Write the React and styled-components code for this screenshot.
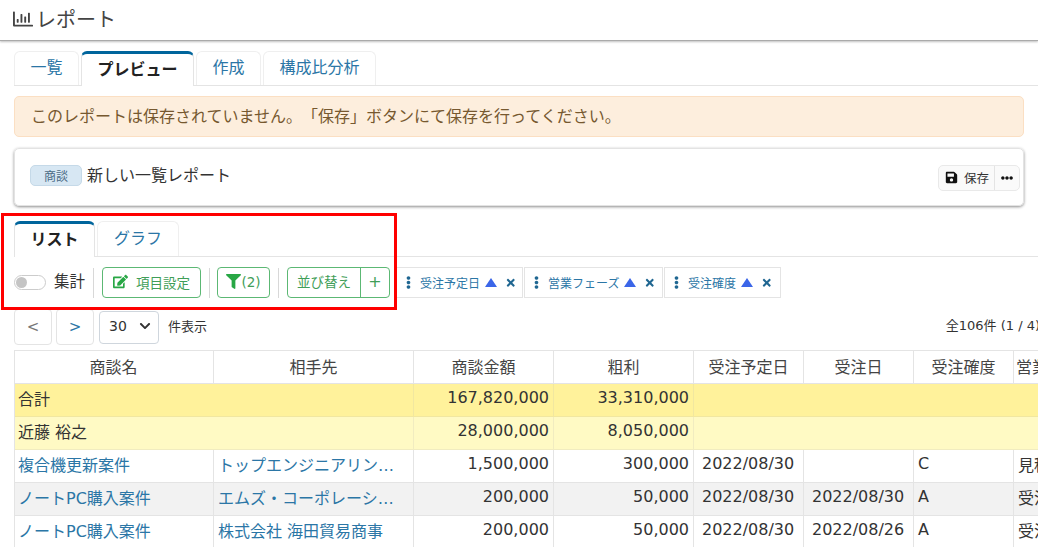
import React from "react";
import styled, { createGlobalStyle } from "styled-components";
import { FaRegChartBar, FaEdit, FaFilter, FaSave, FaEllipsisH, FaEllipsisV, FaTimes, FaChevronDown } from "react-icons/fa";

const Global = createGlobalStyle`
  html, body { margin: 0; padding: 0; background: #fff; overflow: hidden; }
  body { font-family: "DejaVu Sans", "Noto Sans CJK JP", sans-serif; color: #333; width: 1038px; height: 547px; text-spacing-trim: space-all; }
  * { box-sizing: border-box; }
`;
const Page = styled.div`position: relative; width: 1038px; height: 547px; overflow: hidden;`;
const Header = styled.header`
  height: 41px; display: flex; align-items: center; gap: 3px; padding: 0 0 3px 13px;
  border-bottom: 1px solid #aaa; box-shadow: 0 1px 2px rgba(0,0,0,.25);
  font-size: 20px; color: #444;
  svg { font-size: 20px; color: #444; }
`;
const Main = styled.main`padding: 0 14px;`;
const Tabs = styled.div`
  display: flex; gap: 2px; height: ${p => p.$h}px; margin-top: ${p => p.$mt}px;
  border-bottom: 1px solid #e4e4e4; margin-right: -14px;
`;
const Tab = styled.div`
  width: ${p => p.$w}px; display: flex; align-items: center; justify-content: center;
  font-size: 16px; border-radius: 6px 6px 0 0; padding-bottom: 5px;
  color: ${p => (p.$active ? "#222" : "#2b76a6")};
  font-weight: ${p => (p.$active ? 700 : 400)};
  border: 1px solid #efefef;
  border-bottom: none;
  ${p => p.$active && `
    border-top: 3px solid #00659c; border-left-color: #e4e4e4; border-right-color: #e4e4e4;
    background: #fff; margin-bottom: -1px;
  `}
`;
const Alert = styled.div`
  margin-top: 10px; height: 41px; display: flex; align-items: center; padding: 0 0 3px 16px;
  background: #fdeedd; border: 1px solid #fbdfc3; border-radius: 5px; color: #76582f; font-size: 16px;
`;
const Card = styled.section`
  margin-top: 11px; height: 58px; display: flex; align-items: center; justify-content: space-between;
  padding: 0 3px 0 15px; border: 1px solid #e3e3e3; border-radius: 5px;
  box-shadow: 0 1px 3px rgba(0,0,0,.45); font-size: 16px;
`;
const CardTitle = styled.div`display: flex; align-items: center; gap: 5px; padding-bottom: 4px;`;
const CardName = styled.span`padding-bottom: 3px;`;
const Badge = styled.span`
  width: 52px; height: 21px; display: inline-flex; align-items: center; justify-content: center;
  background: #d7e7f3; border: 1px solid #c5d9e8; border-radius: 5px; color: #4a6a85; font-size: 12px;
`;
const SaveGroup = styled.div`
  display: flex; height: 26px; margin-top: 1px; border: 1px solid #e9e9e9; border-radius: 5px; background: #fafafa; font-size: 12.5px; color: #333;
`;
const SaveBtn = styled.div`display: flex; align-items: center; gap: 6px; padding: 0 5px 0 6px; svg { font-size: 13px; color: #111; }`;
const MoreBtn = styled.div`width: 25px; display: flex; align-items: center; justify-content: center; border-left: 1px solid #e4e4e4; svg { font-size: 12px; color: #111; }`;
const Toolbar = styled.div`margin-top: 10px; height: 31px; display: flex; align-items: center;`;
const Toggle = styled.span`
  position: relative; width: 32px; height: 15px; border: 1px solid #ccc; border-radius: 8px; background: #fff;
  &::after { content: ""; position: absolute; left: 1px; top: 1px; width: 11px; height: 11px; border-radius: 50%; background: #c4c4c4; }
`;
const ToggleLabel = styled.span`margin-left: 8px; font-size: 15.5px; padding-bottom: 6px;`;
const Sep = styled.span`width: 1px; height: 30px; background: #d8d8d8; margin: 0 ${p => p.$r ?? 8}px 0 ${p => p.$l ?? 8}px;`;
const GreenBtn = styled.div`
  width: ${p => p.$w}px; height: 31px; display: flex; align-items: center; justify-content: center; gap: ${p => p.$gap ?? 0}px;
  border: 1px solid #5cb874; border-radius: 4px; color: #3f9e58; font-size: 13.5px; background: #fff; padding-bottom: 2px;
  svg { color: #28a745; font-size: ${p => p.$icon ?? 15}px; flex: none; }
`;
const Split = styled.div`
  display: flex; width: 103px; height: 31px; border: 1px solid #5cb874; border-radius: 4px; color: #3f9e58; font-size: 13.5px;
`;
const SplitMain = styled.span`width: 73px; display: flex; align-items: center; justify-content: center; border-right: 1px solid #5cb874; padding-bottom: 3px;`;
const SplitAdd = styled.span`flex: 1; display: flex; align-items: center; justify-content: center; font-size: 16px; padding-bottom: 2px;`;
const Chips = styled.div`display: flex; gap: 1px; margin-left: 6px;`;
const Chip = styled.div`
  width: ${p => p.$w}px; height: 31px; display: flex; align-items: center; padding-left: 5px;
  border: 1px solid #e4e4e4; color: #2b76a6; font-size: 12px;
  .grip { font-size: 13px; color: #1f6691; margin-right: 5px; flex: none; }
  .x { font-size: 11.5px; color: #1f6691; margin-left: 8px; flex: none; }
`;
const ChipText = styled.span`padding-bottom: 1px;`;
const Arrow = styled.svg`width: 12px; height: 9px; margin-left: 5px; flex: none;`;
const Pager = styled.div`margin-top: 11px; height: 36px; width: 1026px; display: flex; align-items: center;`;
const NavBtn = styled.div`
  width: 38px; height: 36px; margin-right: ${p => p.$mr}px; display: flex; align-items: center; justify-content: center;
  border: 1px solid #e4e4e4; border-radius: 4px; font-size: 15px; color: ${p => p.$c};
`;
const Select = styled.div`
  width: 60px; height: 33px; margin-left: 1px; display: flex; align-items: center; justify-content: space-between; padding: 0 7px 2px 9px;
  border: 1px solid #cfd6dd; border-radius: 4px; font-size: 14px; color: #333;
  svg { font-size: 12px; color: #333; }
`;
const Small = styled.span`font-size: 13px; color: #333; padding-bottom: 3px; margin-left: ${p => p.$ml ?? 0}px;`;
const Total = styled(Small)`margin-left: auto; padding-bottom: 5px;`;
const TableWrap = styled.div`margin-top: 5px; width: 1100px; overflow: hidden; border-left: 1px solid #e4e4e4;`;
const Table = styled.table`border-collapse: collapse; table-layout: fixed; width: 1100px; margin-left: -2px; font-size: 16px;`;
const Th = styled.th`
  height: 33px; padding: 0 0 2px; font-weight: 400; color: #444; border: 1px solid #e4e4e4; text-align: center; background: #fff; overflow: hidden; white-space: nowrap;
`;
const Row = styled.tr`background: ${p => p.$bg || "#fff"};`;
const Td = styled.td`
  height: 33px; padding: 0 ${p => p.$pr ?? 4}px 5px 4px; border: 1px solid ${p => p.$line || "#e4e4e4"}; white-space: nowrap; overflow: hidden; text-overflow: ellipsis;
  text-align: ${p => (p.$num ? "right" : "left")};
  color: ${p => (p.$link ? "#2b76a6" : "#333")};
`;
const DateTd = styled(Td)`padding-left: 8px;`;
const Mark = styled.div`
  position: absolute; left: 1px; top: 213px; width: 396px; height: 97px; border: 3px solid #f00; pointer-events: none;
`;

const widths = [200, 200, 140, 140, 110, 110, 100, 100];
const heads = ["商談名", "相手先", "商談金額", "粗利", "受注予定日", "受注日", "受注確度", "営業フェーズ"];
const rows = [
  ["複合機更新案件", "トップエンジニアリング株式会社", "1,500,000", "300,000", "2022/08/30", "", "C", "見積提示"],
  ["ノートPC購入案件", "エムズ・コーポレーション株式会社", "200,000", "50,000", "2022/08/30", "2022/08/30", "A", "受注"],
  ["ノートPC購入案件", "株式会社 海田貿易商事", "200,000", "50,000", "2022/08/30", "2022/08/26", "A", "受注"],
];
const chips = [["受注予定日", 127], ["営業フェーズ", 139], ["受注確度", 117]];

export default function App() {
  return (
    <Page>
      <Global />
      <Header><FaRegChartBar />レポート</Header>
      <Main>
        <Tabs $h={35} $mt={10}>
          <Tab $w={65}>一覧</Tab>
          <Tab $w={113} $active>プレビュー</Tab>
          <Tab $w={65}>作成</Tab>
          <Tab $w={113}>構成比分析</Tab>
        </Tabs>
        <Alert>このレポートは保存されていません。「保存」ボタンにて保存を行ってください。</Alert>
        <Card>
          <CardTitle><Badge>商談</Badge><CardName>新しい一覧レポート</CardName></CardTitle>
          <SaveGroup>
            <SaveBtn><FaSave />保存</SaveBtn>
            <MoreBtn><FaEllipsisH /></MoreBtn>
          </SaveGroup>
        </Card>
        <Tabs $h={36} $mt={15}>
          <Tab $w={81} $active>リスト</Tab>
          <Tab $w={82}>グラフ</Tab>
        </Tabs>
        <Toolbar>
          <Toggle />
          <ToggleLabel>集計</ToggleLabel>
          <Sep />
          <GreenBtn $w={99} $gap={8}><FaEdit />項目設定</GreenBtn>
          <Sep $r={7} />
          <GreenBtn $w={53} $icon={15}><FaFilter />(2)</GreenBtn>
          <Sep />
          <Split><SplitMain>並び替え</SplitMain><SplitAdd>+</SplitAdd></Split>
          <Chips>
            {chips.map(([label, w]) => (
              <Chip key={label} $w={w}>
                <FaEllipsisV className="grip" /><ChipText>{label}</ChipText>
                <Arrow viewBox="0 0 12 9"><path d="M6 0 L12 9 L0 9 Z" fill="#3b66e8" /></Arrow>
                <FaTimes className="x" />
              </Chip>
            ))}
          </Chips>
        </Toolbar>
        <Pager>
          <NavBtn $mr={4} $c="#777">&lt;</NavBtn>
          <NavBtn $mr={4} $c="#2b76a6">&gt;</NavBtn>
          <Select>30<FaChevronDown /></Select>
          <Small $ml={9}>件表示</Small>
          <Total>全106件 (1 / 4)</Total>
        </Pager>
        <TableWrap>
          <Table>
            <colgroup>{widths.map((w, i) => <col key={i} style={{ width: w }} />)}</colgroup>
            <thead><tr>{heads.map(h => <Th key={h}>{h}</Th>)}</tr></thead>
            <tbody>
              <Row $bg="#fff29b">
                <Td colSpan={2} $line="#f1e7a0">合計</Td>
                <Td $num $line="#f1e7a0">167,820,000</Td>
                <Td $num $line="#f1e7a0">33,310,000</Td>
                <Td colSpan={4} $line="#f1e7a0" />
              </Row>
              <Row $bg="#fffac4">
                <Td colSpan={2} $line="#f1ecc0">近藤 裕之</Td>
                <Td $num $line="#f1ecc0">28,000,000</Td>
                <Td $num $line="#f1ecc0">8,050,000</Td>
                <Td colSpan={4} $line="#f1ecc0" />
              </Row>
              {rows.map((r, i) => (
                <Row key={i} $bg={i === 1 ? "#f2f2f2" : "#fff"}>
                  <Td $link>{r[0]}</Td>
                  <Td $link $pr={14}>{r[1]}</Td>
                  <Td $num>{r[2]}</Td>
                  <Td $num>{r[3]}</Td>
                  <DateTd>{r[4]}</DateTd>
                  <DateTd>{r[5]}</DateTd>
                  <Td>{r[6]}</Td>
                  <Td>{r[7]}</Td>
                </Row>
              ))}
            </tbody>
          </Table>
        </TableWrap>
      </Main>
      <Mark />
    </Page>
  );
}
